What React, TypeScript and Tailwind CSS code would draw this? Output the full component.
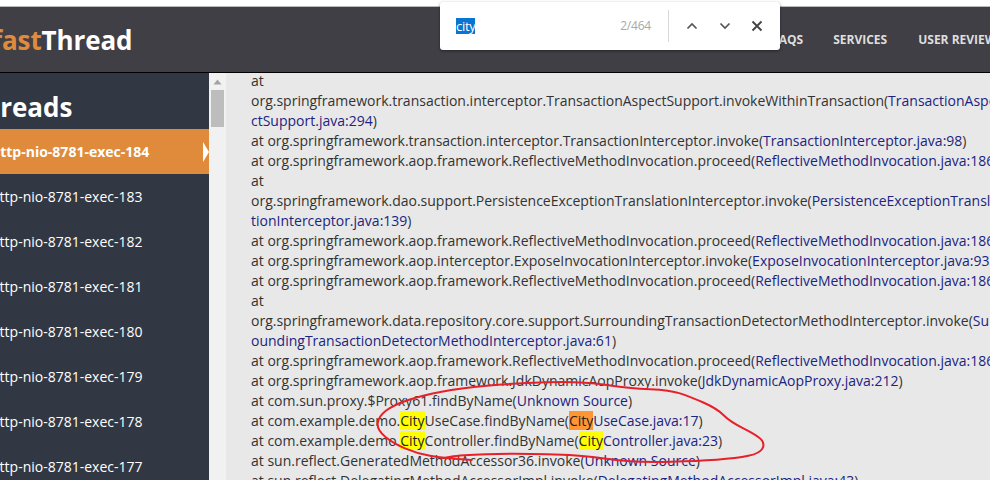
import { ReactNode } from "react";

// fastThread stack trace view with the browser find bar open

const threads = ["183", "182", "181", "180", "179", "178", "177"];

// hand drawn circle, in units of 1/3 px from (380,375)
const circle = [
  [275, 255], [190, 250], [110, 235], [40, 205], [-9, 165], [-5, 125], [40, 90], [130, 60],
  [240, 40], [400, 25], [600, 18], [750, 40], [870, 45], [930, 65], [1010, 100], [1050, 140],
  [1130, 180], [1155, 205], [1140, 235], [1070, 250], [950, 258], [800, 262], [700, 255],
  [600, 240], [400, 235], [240, 240], [185, 250],
];

function smooth(pts: number[][]) {
  let d = `M${pts[0][0]} ${pts[0][1]}`;
  for (let i = 1; i < pts.length - 1; i++) {
    const mx = (pts[i][0] + pts[i + 1][0]) / 2;
    const my = (pts[i][1] + pts[i + 1][1]) / 2;
    d += `Q${pts[i][0]} ${pts[i][1]} ${mx} ${my}`;
  }
  const last = pts[pts.length - 1];
  return d + `L${last[0]} ${last[1]}`;
}

function B({ children }: { children: ReactNode }) {
  return <span className="text-[#1c2480]">{children}</span>;
}

function Hit({ children, current }: { children: ReactNode; current?: boolean }) {
  return (
    <span className={current ? "bg-[#ff9632] text-[#222]" : "bg-[#ffff00] text-[#222]"}>
      {children}
    </span>
  );
}

function Line({ children }: { children: ReactNode }) {
  return <div className="h-5 whitespace-nowrap leading-5">{children}</div>;
}

function FindBar() {
  return (
    <div className="absolute left-[440px] top-[2px] flex h-[48px] w-[340px] items-center rounded-[3px] bg-white shadow-[0_1px_3px_rgba(0,0,0,0.45)]">
      <span className="ml-[16px] bg-[#0a74d0] text-[13px] leading-[16px] tracking-[-0.3px] text-white">city</span>
      <span className="ml-auto text-[12px] tracking-[-0.2px] text-[#a8a8a8]">2/464</span>
      <div className="ml-[17px] h-[32px] w-px bg-[#d8d8d8]" />
      <svg className="ml-[17px]" width="12" height="8" viewBox="0 0 12 8" fill="none" stroke="#555" strokeWidth="1.7">
        <path d="M1.500 6.500 6 2l4.500 4.500" />
      </svg>
      <svg className="ml-[21px]" width="12" height="8" viewBox="0 0 12 8" fill="none" stroke="#555" strokeWidth="1.7">
        <path d="M1.500 1.500 6 6l4.500-4.500" />
      </svg>
      <svg className="ml-[20px] mr-[17px]" width="12" height="12" viewBox="0 0 12 12" fill="none" stroke="#444" strokeWidth="1.900">
        <path d="M1.500 1.500l9 9M10.500 1.500l-9 9" />
      </svg>
    </div>
  );
}

export default function App() {
  return (
    <div className="relative flex h-[480px] w-[990px] flex-col overflow-hidden bg-white font-['Open_Sans',sans-serif]">
      <div className="h-[6px] shrink-0 bg-white" />
      <header className="flex h-[67px] shrink-0 items-center border-t border-b border-t-[#b9b9b9] border-b-black bg-[#413f46]">
        <div className="ml-[-8px] text-[26px] font-bold leading-none tracking-[-0.1px]">
          <span className="text-[#e08b3c]">fast</span>
          <span className="text-white">Thread</span>
        </div>
        <nav className="ml-auto mr-[-13px] flex gap-[31px] whitespace-nowrap text-[12px] font-bold text-[#dedede]">
          <span className="mr-[-1px]">FAQS</span>
          <span>SERVICES</span>
          <span>USER REVIEWS</span>
        </nav>
      </header>

      <div className="flex min-h-0 flex-1">
        <aside className="w-[209px] shrink-0 overflow-hidden bg-[#323843] text-white">
          <h2 className="ml-[-32px] mt-[16px] h-[40px] text-[26px] font-bold leading-[36px]">Threads</h2>
          <div className="relative flex h-[45px] items-center bg-[#e08b3c] text-[14px] font-bold">
            <span className="ml-[-9px]">http-nio-8781-exec-184</span>
            <span className="ml-auto h-0 w-0 border-y-[10px] border-r-0 border-l-[6px] border-y-transparent border-l-white" />
          </div>
          {threads.map((t) => (
            <div key={t} className="flex h-[45px] items-center text-[14px]">
              <span className="ml-[-9px]">http-nio-8781-exec-{t}</span>
            </div>
          ))}
        </aside>

        <div className="flex w-[17px] shrink-0 flex-col items-center bg-[#f1f1f1]">
          <svg className="mt-[6px]" width="9" height="6" viewBox="0 0 9 6">
            <path d="M4.500 0.500 8.500 5.500h-8z" fill="#a3a3a3" />
          </svg>
          <div className="mt-[5px] h-[37px] w-[13px] bg-[#bdbdbd]" />
        </div>

        <main className="min-w-0 flex-1 overflow-hidden bg-[#e8e8e8] pl-[25px] text-[14px] text-[#333]">
          <div className="mt-[-2px]">
            <Line>at</Line>
            <Line>org.springframework.transaction.interceptor.TransactionAspectSupport.invokeWithinTransaction(<B>TransactionAspe</B></Line>
            <Line><B>ctSupport.java:294</B>)</Line>
            <Line>at org.springframework.transaction.interceptor.TransactionInterceptor.invoke(<B>TransactionInterceptor.java:98</B>)</Line>
            <Line>at org.springframework.aop.framework.ReflectiveMethodInvocation.proceed(<B>ReflectiveMethodInvocation.java:186</B>)</Line>
            <Line>at</Line>
            <Line>org.springframework.dao.support.PersistenceExceptionTranslationInterceptor.invoke(<B>PersistenceExceptionTransl</B></Line>
            <Line><B>tionInterceptor.java:139</B>)</Line>
            <Line>at org.springframework.aop.framework.ReflectiveMethodInvocation.proceed(<B>ReflectiveMethodInvocation.java:186</B>)</Line>
            <Line>at org.springframework.aop.interceptor.ExposeInvocationInterceptor.invoke(<B>ExposeInvocationInterceptor.java:93</B>)</Line>
            <Line>at org.springframework.aop.framework.ReflectiveMethodInvocation.proceed(<B>ReflectiveMethodInvocation.java:186</B>)</Line>
            <Line>at</Line>
            <Line>org.springframework.data.repository.core.support.SurroundingTransactionDetectorMethodInterceptor.invoke(<B>Su</B></Line>
            <Line><B>oundingTransactionDetectorMethodInterceptor.java:61</B>)</Line>
            <Line>at org.springframework.aop.framework.ReflectiveMethodInvocation.proceed(<B>ReflectiveMethodInvocation.java:186</B>)</Line>
            <Line>at org.springframework.aop.framework.JdkDynamicAopProxy.invoke(<B>JdkDynamicAopProxy.java:212</B>)</Line>
            <Line>at com.sun.proxy.$Proxy61.findByName(<B>Unknown Source</B>)</Line>
            <Line>at com.example.demo.<Hit>City</Hit>UseCase.findByName(<Hit current>City</Hit><B>UseCase.java:17</B>)</Line>
            <Line>at com.example.demo.<Hit>City</Hit>Controller.findByName(<Hit>City</Hit><B>Controller.java:23</B>)</Line>
            <Line>at sun.reflect.GeneratedMethodAccessor36.invoke(<B>Unknown Source</B>)</Line>
            <Line>at sun.reflect.DelegatingMethodAccessorImpl.invoke(<B>DelegatingMethodAccessorImpl.java:43</B>)</Line>
          </div>
        </main>
      </div>

      <FindBar />

      <svg className="pointer-events-none absolute left-[380px] top-[375px] overflow-visible" width="400" height="100" viewBox="0 0 1200 300" fill="none">
        <path d={smooth(circle)} stroke="#e8202a" strokeWidth="6" strokeLinecap="round" />
      </svg>
    </div>
  );
}
